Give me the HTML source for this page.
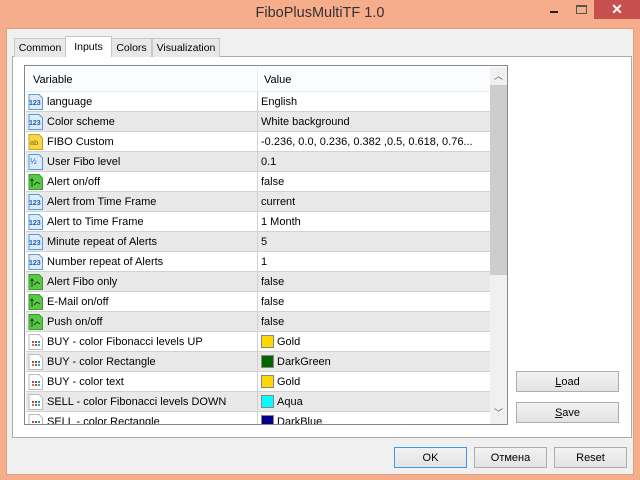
<!DOCTYPE html><html><head><meta charset="utf-8"><style>
*{box-sizing:border-box;margin:0;padding:0}
body{width:640px;height:480px;background:#f6ad8c;position:relative;overflow:hidden;font-family:"Liberation Sans",Tahoma,sans-serif;font-size:11px;color:#000}
.a{position:absolute}
.title{left:0;top:5px;width:640px;text-align:center;font-size:14.5px;color:#333}
.client{left:6px;top:28px;width:628px;height:447px;background:#f0f0f0;border:1px solid #e0a080}
.tab{top:38px;height:19px;border:1px solid #c8c8c8;border-bottom:none;background:#e8e8e8;text-align:center;line-height:19px;font-size:10.5px}
.panel{left:12px;top:56px;width:620px;height:382px;background:#fff;border:1px solid #ababab}
.list{left:24px;top:65px;width:484px;height:360px;border:1px solid #828790;background:#fff;overflow:hidden}
.row{position:absolute;left:1px;width:464px;height:20px;border-bottom:1px solid #d2d2d2;line-height:21px}
.row.g{background:#e9e9e9}
.row .v{position:absolute;left:21px}
.row .w{position:absolute;left:231px;top:0;height:20px;border-left:1px solid #d2d2d2;padding-left:3px}
.ic{position:absolute;left:2px;top:2px;width:15px;height:16px}
.sw{display:inline-block;width:13px;height:13px;border:1px solid #888;vertical-align:-3px;margin-right:3px}
.btn{height:21px;border:1px solid #adadad;background:linear-gradient(#f2f2f2,#e3e3e3);text-align:center;line-height:20px}
</style></head><body>
<div class="a title">FiboPlusMultiTF 1.0</div>
<div class="a" style="left:550px;top:11px;width:8px;height:2px;background:#222"></div>
<div class="a" style="left:576px;top:5px;width:11px;height:9px;border:1px solid #555;border-top-width:2px"></div>
<div class="a" style="left:594px;top:0;width:46px;height:19px;background:#c7504f;color:#fff;text-align:center;font-size:14px;line-height:18px;font-weight:bold">✕</div>
<div class="a client"></div>
<div class="a panel"></div>
<div class="a tab" style="left:14px;width:52px">Common</div>
<div class="a tab" style="left:111px;width:41px">Colors</div>
<div class="a tab" style="left:152px;width:68px">Visualization</div>
<div class="a tab" style="left:65px;top:36px;width:47px;height:21px;background:#fff;line-height:20px">Inputs</div>
<div class="a list">
<div class="a" style="left:1px;top:1px;width:464px;height:25px;background:#fafcfd;border-bottom:1px solid #e5eef7;line-height:27px"><span class="a" style="left:7px">Variable</span><span class="a" style="left:231px;top:0;height:24px;border-left:1px solid #e5eef7;padding-left:6px">Value</span></div>
<div id="rows"></div>
<div class="a" style="left:465px;top:1px;width:17px;height:357px;background:#f0f0f0"></div>
<div class="a" style="left:465px;top:19px;width:17px;height:190px;background:#cdcdcd"></div>
<div class="a" style="left:465px;top:3px;width:17px;text-align:center;font-size:9px;color:#555">︿</div>
<div class="a" style="left:465px;top:340px;width:17px;text-align:center;font-size:9px;color:#555">﹀</div>
</div>
<div class="a btn" style="left:516px;top:371px;width:103px"><u>L</u>oad</div>
<div class="a btn" style="left:516px;top:402px;width:103px"><u>S</u>ave</div>
<div class="a btn" style="left:394px;top:447px;width:73px;border-color:#3c9ae8">OK</div>
<div class="a btn" style="left:474px;top:447px;width:73px">Отмена</div>
<div class="a btn" style="left:554px;top:447px;width:73px">Reset</div>
<script>
var I={n:'<svg class="ic" viewBox="0 0 15 16"><path d="M1 .5h10l3.5 3.5v11.5H1z" fill="#dcebfa" stroke="#5b9bd5"/><text x="1" y="11" font-size="7" fill="#1f5fb0" font-family="Liberation Sans" font-weight="bold">123</text></svg>',
s:'<svg class="ic" viewBox="0 0 15 16"><path d="M1 .5h10l3.5 3.5v11.5H1z" fill="#f8d54a" stroke="#c9a21a"/><text x="2" y="11" font-size="7.5" fill="#8a6a00" font-family="Liberation Sans">ab</text></svg>',
h:'<svg class="ic" viewBox="0 0 15 16"><path d="M1 .5h10l3.5 3.5v11.5H1z" fill="#dcebfa" stroke="#5b9bd5"/><text x="2" y="10" font-size="8" fill="#1f5fb0" font-family="Liberation Sans">½</text></svg>',
b:'<svg class="ic" viewBox="0 0 15 16"><path d="M1 .5h10l3.5 3.5v11.5H1z" fill="#5cc64a" stroke="#3a9a2a"/><path d="M4 13V5M2.5 7L4 5 5.5 7M6 11l3-3 3 2" stroke="#0a4a00" fill="none"/></svg>',
c:'<svg class="ic" viewBox="0 0 15 16"><path d="M1 .5h10l3.5 3.5v11.5H1z" fill="#fff" stroke="#bbb"/><rect x="4" y="7" width="2" height="2" fill="#d33"/><rect x="7" y="7" width="2" height="2" fill="#36c"/><rect x="10" y="7" width="2" height="2" fill="#3a3"/><rect x="4" y="10" width="2" height="2" fill="#c80"/><rect x="7" y="10" width="2" height="2" fill="#a3a"/><rect x="10" y="10" width="2" height="2" fill="#3aa"/></svg>'};
var R=[['n','language','English'],['n','Color scheme','White background'],['s','FIBO Custom','-0.236, 0.0, 0.236, 0.382 ,0.5, 0.618, 0.76...'],['h','User Fibo level','0.1'],['b','Alert on/off','false'],['n','Alert from Time Frame','current'],['n','Alert to Time Frame','1 Month'],['n','Minute repeat of Alerts','5'],['n','Number repeat of Alerts','1'],['b','Alert Fibo only','false'],['b','E-Mail on/off','false'],['b','Push on/off','false'],['c','BUY -  color Fibonacci levels UP','Gold','#ffd700'],['c','BUY -  color Rectangle','DarkGreen','#006400'],['c','BUY -  color text','Gold','#ffd700'],['c','SELL - color Fibonacci levels DOWN','Aqua','#00ffff'],['c','SELL - color Rectangle','DarkBlue','#00008b']];
var h='';R.forEach(function(r,i){h+='<div class="row'+(i%2?' g':'')+'" style="top:'+(26+20*i)+'px">'+I[r[0]]+'<span class="v">'+r[1]+'</span><span class="w">'+(r[3]?'<span class="sw" style="background:'+r[3]+'"></span>':'')+r[2]+'</span></div>'});
document.getElementById('rows').innerHTML=h;
</script>
</body></html>
